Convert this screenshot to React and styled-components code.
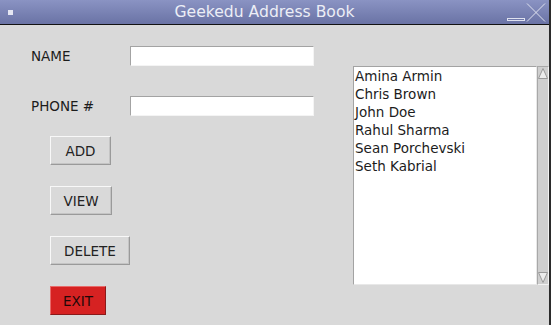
import React from 'react'
import styled, { createGlobalStyle } from 'styled-components'

const Global = createGlobalStyle`
  html, body { margin: 0; padding: 0; background: #d9d9d9; overflow: hidden; }
  * { box-sizing: border-box; }
`

const Window = styled.div`
  width: 551px;
  height: 325px;
  display: flex;
  flex-direction: column;
  border-right: 2px solid #2b2b2b;
  font-family: 'DejaVu Sans', 'Liberation Sans', sans-serif;
  background: #d9d9d9;
`

const TitleBar = styled.div`
  height: 25px;
  flex: 0 0 25px;
  display: flex;
  align-items: center;
  background: linear-gradient(#8a93c3, #6a73a5);
  border-bottom: 1px solid #121212;
`

const WinIcon = styled.div`
  width: 5px;
  height: 5px;
  margin-left: 8px;
  background: #e4e6f2;
`

const Title = styled.div`
  flex: 1;
  text-align: center;
  color: #eceef6;
  font-size: 15.6px;
  padding-left: 11px;
`

const Controls = styled.div`
  display: flex;
  align-items: center;
  margin-right: 2px;
`

const Body = styled.div`
  flex: 1;
  display: flex;
`

const LeftPane = styled.div`
  flex: 0 0 353px;
  padding: 21px 0 0 31px;
`

const Form = styled.div`
  display: grid;
  grid-template-columns: 99px 184px;
  grid-auto-rows: 20px;
  row-gap: 30px;
  align-items: center;
`

const Label = styled.div`
  font-size: 13.5px;
  color: #1c1c1c;
`

const Entry = styled.input`
  width: 184px;
  height: 20px;
  background: #fff;
  border: 1px solid;
  border-color: #a3a3a3 #f4f4f4 #f4f4f4 #a3a3a3;
  outline: none;
  padding: 0;
`

const Buttons = styled.div`
  display: flex;
  flex-direction: column;
  align-items: flex-start;
  gap: 21px;
  margin: 20px 0 0 19px;
`

const Button = styled.button`
  width: ${p => p.$w}px;
  height: 29px;
  padding: 0;
  font-family: inherit;
  font-size: 13.5px;
  color: ${p => (p.$danger ? '#1e0808' : '#222')};
  background: ${p => (p.$danger ? '#d62222' : '#d9d9d9')};
  border: 1px solid;
  border-color: ${p =>
    p.$danger ? '#e86a6a #8a1a1a #8a1a1a #e86a6a' : '#f8f8f8 #9a9a9a #9a9a9a #f8f8f8'};
  box-shadow: ${p => (p.$danger ? 'none' : 'inset -1px -1px 0 #c4c4c4')};
`

const ListPane = styled.div`
  flex: 1;
  padding-top: 41px;
`

const ListBox = styled.div`
  display: flex;
  height: 219px;
`

const List = styled.ul`
  flex: 1;
  margin: 0;
  padding: 0 0 0 1px;
  list-style: none;
  background: #fff;
  border: 1px solid;
  border-color: #a3a3a3 #e8e8e8 #e8e8e8 #a3a3a3;
`

const Item = styled.li`
  font-size: 13.5px;
  line-height: 18px;
  color: #1c1c1c;
  white-space: nowrap;
`

const ScrollBar = styled.div`
  width: 12px;
  display: flex;
  flex-direction: column;
  justify-content: space-between;
  background: #cfcfcf;
  border: 1px solid;
  border-color: #a8a8a8 #f2f2f2 #f2f2f2 #a8a8a8;
`

const Arrow = ({ down }) => (
  <svg width="10" height="13" viewBox="0 0 10 13">
    <polygon
      points={down ? '0.5,1.5 9.5,1.5 5,11.5' : '0.5,11.5 9.5,11.5 5,1.5'}
      fill="#ececec"
      stroke="#9a9a9a"
      strokeWidth="1"
    />
  </svg>
)

const names = ['Amina Armin', 'Chris Brown', 'John Doe', 'Rahul Sharma', 'Sean Porchevski', 'Seth Kabrial']

export default function App() {
  return (
    <>
      <Global />
      <Window>
        <TitleBar>
          <WinIcon />
          <Title>Geekedu Address Book</Title>
          <Controls>
            <svg width="42" height="24" viewBox="0 0 42 24">
              <rect x="2.5" y="18.5" width="17" height="2" fill="none" stroke="#dfe2ef" strokeWidth="1" />
              <line x1="22" y1="3.5" x2="40" y2="21.5" stroke="#dfe2ef" strokeWidth="1" />
              <line x1="40" y1="3.5" x2="22" y2="21.5" stroke="#dfe2ef" strokeWidth="1" />
            </svg>
          </Controls>
        </TitleBar>
        <Body>
          <LeftPane>
            <Form>
              <Label>NAME</Label>
              <Entry />
              <Label>PHONE #</Label>
              <Entry />
            </Form>
            <Buttons>
              <Button $w={61}>ADD</Button>
              <Button $w={62}>VIEW</Button>
              <Button $w={80}>DELETE</Button>
              <Button $w={56} $danger>EXIT</Button>
            </Buttons>
          </LeftPane>
          <ListPane>
            <ListBox>
              <List>
                {names.map(n => (
                  <Item key={n}>{n}</Item>
                ))}
              </List>
              <ScrollBar>
                <Arrow />
                <Arrow down />
              </ScrollBar>
            </ListBox>
          </ListPane>
        </Body>
      </Window>
    </>
  )
}
